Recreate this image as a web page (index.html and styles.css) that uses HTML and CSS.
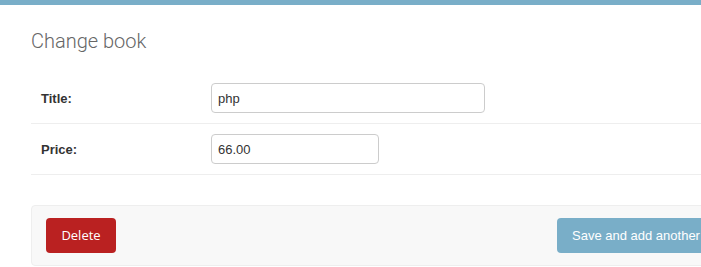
FILE: index.html
```html
<!DOCTYPE html>
<html>
<head>
<meta charset="utf-8">
<link rel="stylesheet" href="styles.css">
</head>
<body>
<div class="topbar"></div>
<div class="content">
  <h1 class="title">Change book</h1>
  <form class="form">
    <div class="form-row">
      <label class="label" for="id_title">Title:</label>
      <input class="input input-title" id="id_title" type="text" value="php">
    </div>
    <div class="form-row">
      <label class="label" for="id_price">Price:</label>
      <input class="input input-price" id="id_price" type="text" value="66.00">
    </div>
    <div class="submit-row">
      <a class="deletelink" href="#">Delete</a>
      <div class="save-group">
        <span class="btn">Save and add another</span>
        <span class="btn">Save and continue editing</span>
        <span class="btn btn-default">SAVE</span>
      </div>
    </div>
  </form>
</div>
</body>
</html>
```
FILE: styles.css
```css
html, body {
  margin: 0;
  padding: 0;
  overflow: hidden;
  background: #fff;
}
body {
  font-family: "Liberation Sans", Arial, sans-serif;
  font-size: 13px;
  color: #333;
}
.topbar {
  height: 5px;
  background: #79aec8;
}
.content {
  padding: 24px 0 0 31px;
  width: 971px;
}
.title {
  margin: 0 0 20px;
  font-family: Roboto, sans-serif;
  font-weight: 300;
  font-size: 20px;
  line-height: 24px;
  color: #666;
}
.form {
  margin: 0;
}
.form-row {
  display: flex;
  align-items: center;
  padding: 10px;
  border-bottom: 1px solid #eee;
}
.label {
  width: 160px;
  padding-right: 10px;
  font-weight: bold;
  color: #333;
  font-size: 13px;
}
.input {
  box-sizing: border-box;
  height: 30px;
  border: 1px solid #ccc;
  border-radius: 4px;
  padding: 5px 6px;
  font-family: "Liberation Sans", Arial, sans-serif;
  font-size: 13px;
  color: #333;
  background: #fff;
  margin: 0;
}
.input-title { width: 274px; }
.input-price { width: 168px; }
.submit-row {
  display: flex;
  align-items: center;
  margin-top: 30px;
  padding: 12px 14px;
  background: #f8f8f8;
  border: 1px solid #eee;
  border-radius: 4px;
}
.deletelink {
  display: block;
  box-sizing: border-box;
  width: 70px;
  height: 35px;
  line-height: 35px;
  text-align: center;
  background: #ba2121;
  color: #fff;
  border-radius: 4px;
  text-decoration: none;
  font-family: "Open Sans", sans-serif;
  font-size: 13px;
}
.save-group {
  display: flex;
  gap: 5px;
  margin-left: 441px;
  white-space: nowrap;
}
.btn {
  display: block;
  height: 35px;
  line-height: 35px;
  padding: 0 15px;
  background: #79aec8;
  color: #fff;
  border-radius: 4px;
  font-size: 13px;
}
.btn-default {
  background: #417690;
  font-weight: bold;
}
```
